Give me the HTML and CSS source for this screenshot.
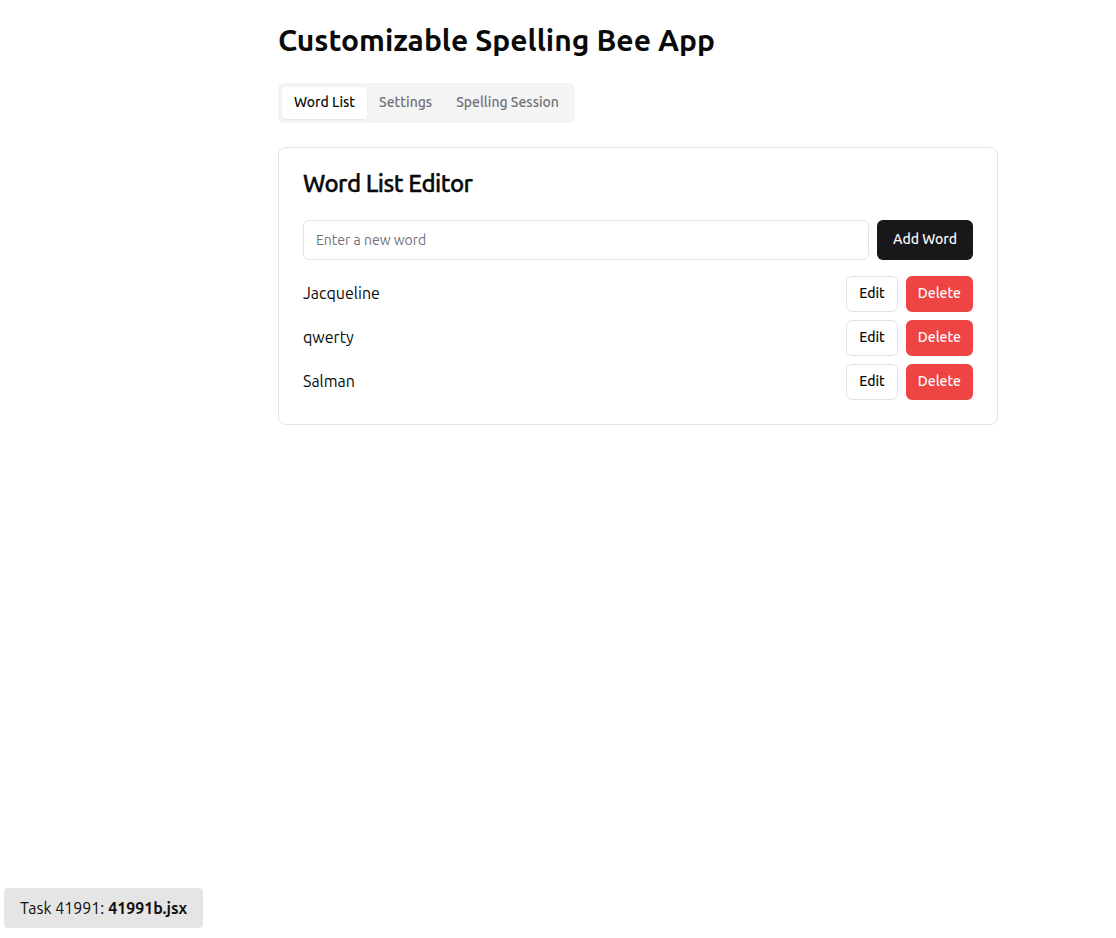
FILE: index.html
```html
<!DOCTYPE html>
<html>
<head>
<meta charset="utf-8">
<link rel="stylesheet" href="styles.css">
</head>
<body>
<div class="page">
  <h1 class="title">Customizable Spelling Bee App</h1>
  <div class="tabs">
    <button class="tab active">Word List</button>
    <button class="tab">Settings</button>
    <button class="tab">Spelling Session</button>
  </div>
  <div class="card">
    <h2 class="card-title">Word List Editor</h2>
    <div class="add-row">
      <input class="word-input" type="text" placeholder="Enter a new word">
      <button class="btn btn-dark">Add Word</button>
    </div>
    <ul class="words">
      <li class="word-row"><span class="word">Jacqueline</span><div class="actions"><button class="btn btn-outline">Edit</button><button class="btn btn-red">Delete</button></div></li>
      <li class="word-row"><span class="word">qwerty</span><div class="actions"><button class="btn btn-outline">Edit</button><button class="btn btn-red">Delete</button></div></li>
      <li class="word-row"><span class="word">Salman</span><div class="actions"><button class="btn btn-outline">Edit</button><button class="btn btn-red">Delete</button></div></li>
    </ul>
  </div>
</div>
<div class="task-badge">Task 41991: <b>41991b.jsx</b></div>
</body>
</html>
```
FILE: styles.css
```css
* { box-sizing: border-box; }
html, body { margin: 0; padding: 0; background: #fff; }
body {
  font-family: Ubuntu, "Noto Sans", "Open Sans", sans-serif;
  color: #0a0a0a;
}
.page {
  width: 720px;
  margin-left: 278px;
  padding-top: 22px;
}
.title {
  margin: 0;
  font-size: 30px;
  line-height: 36px;
  font-weight: 700;
}
.tabs {
  display: inline-flex;
  margin-top: 25px;
  padding: 4px;
  background: #f4f4f5;
  border-radius: 6px;
  height: 40px;
}
.tab {
  font-family: inherit;
  font-size: 14px;
  font-weight: 500;
  border: none;
  background: transparent;
  color: #71717a;
  padding: 0 12px 2px;
  border-radius: 4px;
  height: 32px;
  cursor: pointer;
}
.tab.active {
  background: #fff;
  color: #0a0a0a;
  box-shadow: 0 1px 2px rgba(0,0,0,0.06);
}
.card {
  margin-top: 24px;
  border: 1px solid #e4e4e7;
  border-radius: 8px;
  padding: 24px;
}
.card-title {
  margin: 0;
  font-size: 24px;
  line-height: 24px;
  font-weight: 500;
  -webkit-text-stroke: 0.35px currentColor;
  letter-spacing: -0.5px;
}
.add-row {
  display: flex;
  gap: 8px;
  margin-top: 24px;
}
.word-input {
  flex: 1;
  height: 40px;
  border: 1px solid #e4e4e7;
  border-radius: 6px;
  padding: 0 12px;
  font-family: inherit;
  font-size: 14px;
  color: #0a0a0a;
}
.word-input::placeholder { color: #71717a; }
.btn {
  font-family: inherit;
  font-size: 14px;
  font-weight: 500;
  border-radius: 6px;
  border: none;
  cursor: pointer;
}
.btn-dark {
  background: #18181b;
  color: #fafafa;
  height: 40px;
  padding: 0 16px 2px;
}
.words {
  list-style: none;
  margin: 16px 0 0;
  padding: 0;
  display: flex;
  flex-direction: column;
  gap: 8px;
}
.word-row {
  display: flex;
  align-items: center;
  justify-content: space-between;
  height: 36px;
}
.word { font-size: 16px; padding-bottom: 2px; }
.actions { display: flex; gap: 8px; }
.btn-outline {
  background: #fff;
  border: 1px solid #e4e4e7;
  color: #0a0a0a;
  height: 36px;
  padding: 0 12px 2px;
}
.btn-red {
  background: #ef4444;
  color: #fafafa;
  height: 36px;
  padding: 0 12px 2px;
}
.task-badge {
  position: fixed;
  left: 4px;
  bottom: 10px;
  height: 40px;
  padding: 0 16px;
  display: flex;
  align-items: center;
  background: #e5e5e5;
  border-radius: 4px;
  font-size: 16px;
  color: #111;
}
.task-badge b { margin-left: 4px; }
```
